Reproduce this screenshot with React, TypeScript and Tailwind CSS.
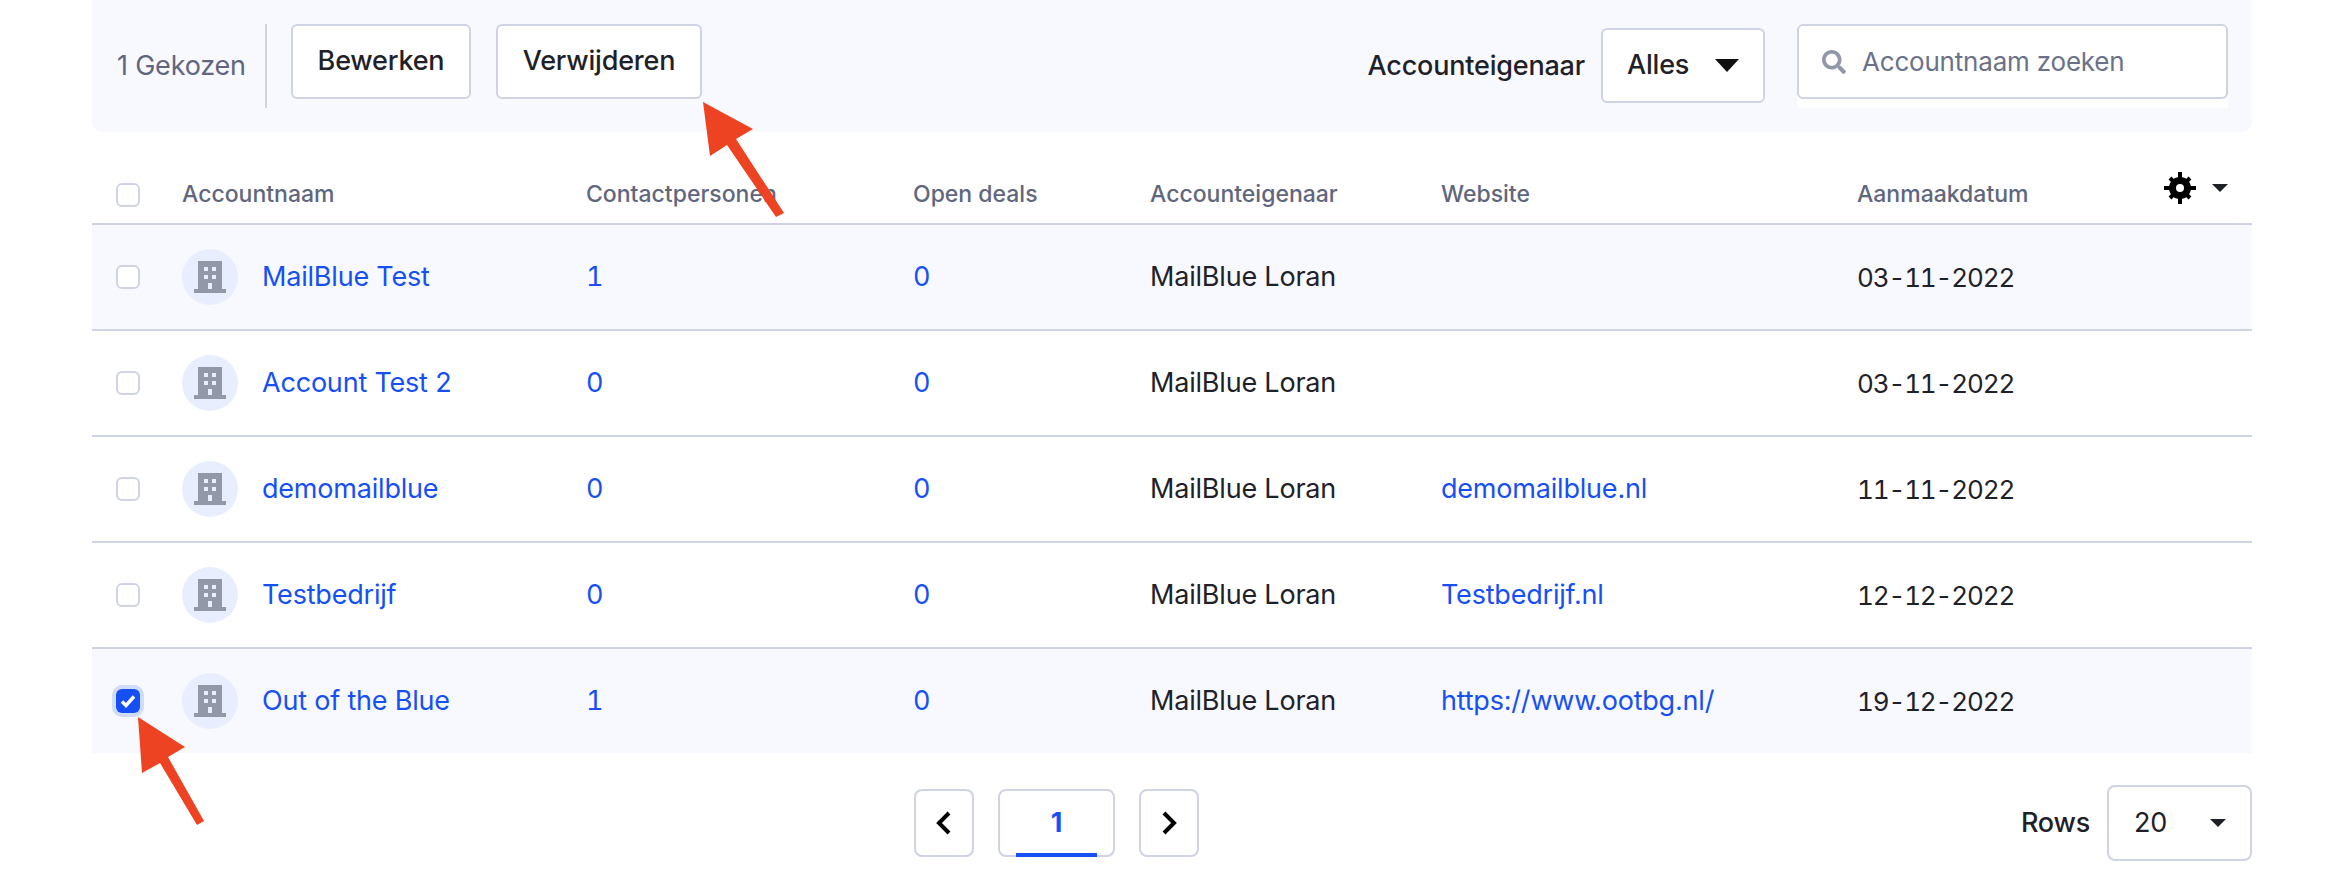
import { FaSearch } from 'react-icons/fa'

const COLS = 'grid grid-cols-[90px_404px_327px_237px_291px_416px_1fr]'

const ROWS = [
  { name: 'MailBlue Test', contacts: '1', site: '', date: '03-11-2022', shaded: true },
  { name: 'Account Test 2', contacts: '0', site: '', date: '03-11-2022' },
  { name: 'demomailblue', contacts: '0', site: 'demomailblue.nl', date: '11-11-2022' },
  { name: 'Testbedrijf', contacts: '0', site: 'Testbedrijf.nl', date: '12-12-2022' },
  { name: 'Out of the Blue', contacts: '1', site: 'https://www.ootbg.nl/', date: '19-12-2022', shaded: true, checked: true },
]

function Building() {
  return (
    <svg width="32" height="32" viewBox="0 0 32 32" fill="#9398a9">
      <path d="M4 0h24v28h4v4H0v-4h4zM10 6v4h4V6zm8 0v4h4V6zm-8 8v4h4v-4zm8 0v4h4v-4zm-4 8v6h4v-6z" fillRule="evenodd" />
    </svg>
  )
}

function Gear() {
  return (
    <svg width="32" height="32" viewBox="0 0 32 32">
      <g stroke="#000" strokeWidth="4">
        <path d="M16 0v32M0 16h32" />
        <path d="M6 6l20 20M26 6L6 26" />
      </g>
      <circle cx="16" cy="16" r="7.5" fill="none" stroke="#000" strokeWidth="7" />
      <circle cx="16" cy="16" r="4" fill="#fff" />
    </svg>
  )
}

function Checkbox({ checked }: { checked?: boolean }) {
  if (checked) {
    return (
      <div className="flex h-6 w-6 items-center justify-center rounded-[6px] bg-[#1650f5] shadow-[0_0_0_4px_#d0dcfb]">
        <svg width="16" height="14" viewBox="0 0 16 14" fill="none" stroke="#fff" strokeWidth="3.4">
          <path d="M2 7.5l4 4 8-9" />
        </svg>
      </div>
    )
  }
  return <div className="h-6 w-6 rounded-[6px] border-2 border-[#cfd3e3] bg-white" />
}

function Arrow({ className, width, height, points }: { className: string; width: number; height: number; points: string }) {
  return (
    <svg className={className} width={width} height={height} viewBox={`0 0 ${width} ${height}`}>
      <polygon points={points} fill="#ee4323" />
    </svg>
  )
}

export default function App() {
  return (
    <div className="relative h-[896px] w-[2348px] overflow-hidden bg-white pr-[96px] pl-[92px] font-['Inter',sans-serif] text-[27px] tracking-[-0.2px] text-[#1f2129]">
      <div className="flex h-[132px] items-start rounded-b-[10px] bg-[#f8f9fe] pr-6 pl-[25px]">
        <span className="mt-[46px] w-[148px] leading-10 text-[#5f667e]">1 Gekozen</span>
        <div className="mt-6 h-[84px] w-0.5 bg-[#cfd3e3]" />
        <button className="mt-6 ml-6 h-[75px] w-[180px] rounded-[6px] border-2 border-[#cfd3e3] bg-white font-medium">
          Bewerken
        </button>
        <button className="mt-6 ml-[25px] h-[75px] w-[206px] rounded-[6px] border-2 border-[#cfd3e3] bg-white font-medium">
          Verwijderen
        </button>
        <span className="mt-[46px] ml-auto leading-10 font-medium">Accounteigenaar</span>
        <div className="mt-7 ml-4 flex h-[75px] w-[164px] items-center justify-between rounded-[6px] border-2 border-[#cfd3e3] bg-white pr-[24px] pl-[24px] font-medium">
          <span>Alles</span>
          <div className="h-0 w-0 border-x-[12px] border-t-[13px] border-x-transparent border-t-[#111]" />
        </div>
        <div className="mt-6 ml-8 h-[84px] w-[431px] bg-white">
          <div className="flex h-[75px] items-center gap-4 rounded-[6px] border-2 border-[#cfd3e3] pl-[23px]">
            <FaSearch className="h-[24px] w-[24px] text-[#9398a9]" />
            <span className="text-[26px] text-[#6b7189]">Accountnaam zoeken</span>
          </div>
        </div>
      </div>

      <div className={`${COLS} relative mt-[40px] h-[53px] items-center border-b-2 border-[#cfd3e3] pb-[6px] text-[23px] font-medium tracking-normal text-[#5f667e]`}>
        <div className="pl-6">
          <Checkbox />
        </div>
        <span>Accountnaam</span>
        <span>Contactpersonen</span>
        <span>Open deals</span>
        <span>Accounteigenaar</span>
        <span>Website</span>
        <span>Aanmaakdatum</span>
        <div className="absolute top-0 right-6 flex items-start gap-4">
          <Gear />
          <div className="mt-3 h-0 w-0 border-x-[8px] border-t-[8px] border-x-transparent border-t-[#1f2129]" />
        </div>
      </div>

      {ROWS.map((r, i) => (
        <div
          key={r.name}
          className={`${COLS} ${i === 4 ? 'h-[104px]' : 'h-[106px] border-b-2 border-[#cfd3e3]'} items-center ${r.shaded ? 'bg-[#f8f9fe]' : 'bg-white'}`}
        >
          <div className="pl-6">
            <Checkbox checked={r.checked} />
          </div>
          <div className="flex items-center gap-6">
            <div className="flex h-14 w-14 items-center justify-center rounded-full bg-[#e8eefd]">
              <Building />
            </div>
            <span className="text-[#1650f5]">{r.name}</span>
          </div>
          <span className="text-[#1650f5] tabular-nums">{r.contacts}</span>
          <span className="text-[#1650f5] tabular-nums">0</span>
          <span>MailBlue Loran</span>
          <span className="text-[#1650f5]">{r.site}</span>
          <span className="text-[26px] tracking-[-1.15px] tabular-nums">{r.date}</span>
        </div>
      ))}

      <div className="relative mt-8 flex h-[76px] items-center justify-end">
        <div className="absolute top-1 left-[822px] flex gap-6">
          <div className="flex h-[68px] w-[60px] items-center justify-center rounded-[8px] border-2 border-[#cfd3e3]">
            <svg width="16" height="24" viewBox="0 0 16 24" fill="none" stroke="#000" strokeWidth="4">
              <path d="M13 2L3 12l10 10" />
            </svg>
          </div>
          <div className="relative flex h-[68px] w-[117px] items-center justify-center rounded-[8px] border-2 border-[#cfd3e3] font-bold text-[#1650f5]">
            1
            <div className="absolute right-[16px] -bottom-0.5 left-[16px] h-1 bg-[#1650f5]" />
          </div>
          <div className="flex h-[68px] w-[60px] items-center justify-center rounded-[8px] border-2 border-[#cfd3e3]">
            <svg width="16" height="24" viewBox="0 0 16 24" fill="none" stroke="#000" strokeWidth="4">
              <path d="M3 2l10 10L3 22" />
            </svg>
          </div>
        </div>
        <span className="mr-[17px] font-medium">Rows</span>
        <div className="flex h-[76px] w-[145px] items-center justify-between rounded-[8px] border-2 border-[#cfd3e3] pr-[24px] pl-[25px]">
          <span>20</span>
          <div className="h-0 w-0 border-x-[8px] border-t-[8px] border-x-transparent border-t-[#1f2129]" />
        </div>
      </div>

      <Arrow
        className="absolute top-[102px] left-[703px]"
        width={82}
        height={116}
        points="0,0 50,27 33,37 81,111 73,115 24,43 7,54"
      />
      <Arrow
        className="absolute top-[717px] left-[138px]"
        width={68}
        height={110}
        points="0,0 47,30 30,40 66,104 59,108 22,46 4,56"
      />
    </div>
  )
}
